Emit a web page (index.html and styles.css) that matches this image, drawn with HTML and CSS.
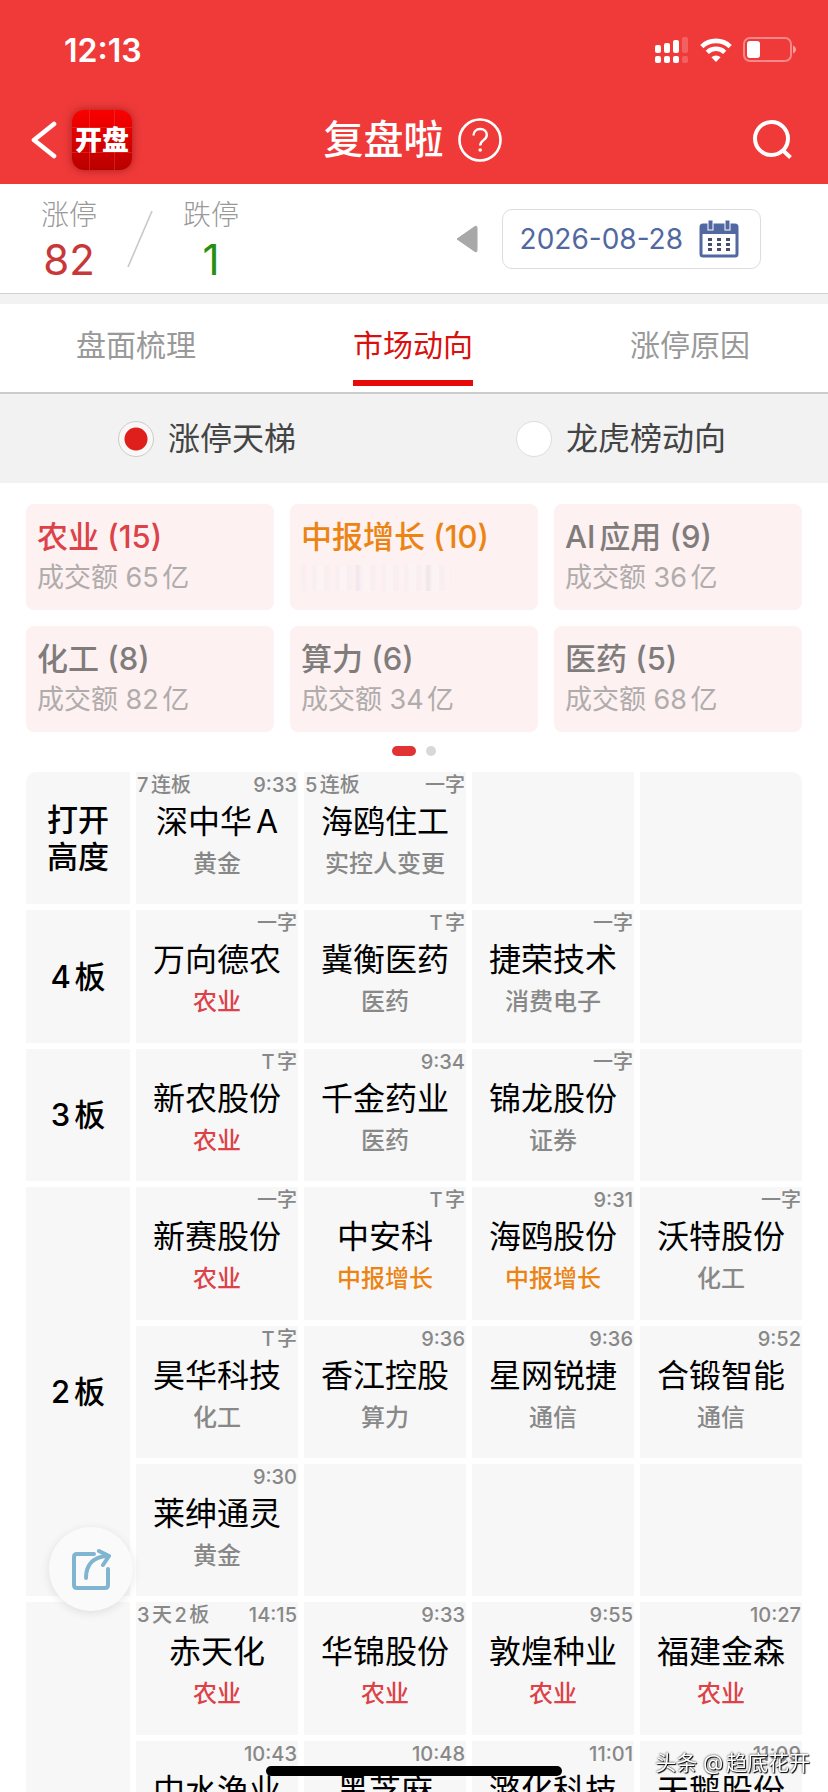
FILE: index.html
```html
<!DOCTYPE html>
<html lang="zh-CN">
<head>
    <meta charset="UTF-8">
    <meta name="viewport" content="width=device-width, initial-scale=1.0">
    <title>复盘啦</title>
    <link rel="stylesheet" href="styles.css">
</head>
<body>
    <header class="top">
        <div class="status">
            <span class="clock">12:13</span>
            <div class="status-icons">
                <svg class="signal" width="34" height="26" viewBox="0 0 34 26" fill="#fff">
                    <rect x="0" y="8" width="6" height="8" rx="2"/>
                    <rect x="9" y="6" width="6" height="10" rx="2"/>
                    <rect x="18" y="3" width="6" height="13" rx="2"/>
                    <rect x="27" y="0" width="6" height="16" rx="2" opacity=".2"/>
                    <rect x="0" y="19" width="6" height="7" rx="2"/>
                    <rect x="9" y="19" width="6" height="7" rx="2"/>
                    <rect x="18" y="19" width="6" height="7" rx="2"/>
                    <rect x="27" y="19" width="6" height="7" rx="2" opacity=".2"/>
                </svg>
                <svg class="wifi" width="32" height="24" viewBox="0 0 32 24">
                    <g fill="none" stroke="#fff" stroke-width="4.6">
                        <path d="M1.8 8.6a20.500 20.500 0 0 1 28.400 0"/>
                        <path d="M7.300 14.300a12.600 12.600 0 0 1 17.400 0"/>
                    </g>
                    <path d="M16 24l-4.600-4.700a6.600 6.600 0 0 1 9.200 0z" fill="#fff"/>
                </svg>
                <svg class="battery" width="54" height="26" viewBox="0 0 54 26">
                    <rect x="1" y="1" width="47" height="23" rx="6" fill="none" stroke="#fff" stroke-width="2" opacity=".4"/>
                    <rect x="4" y="4" width="13" height="17" rx="3" fill="#fff"/>
                    <path d="M50 8.500c4 1.500 4 6.500 0 8z" fill="#fff" opacity=".5"/>
                </svg>
            </div>
        </div>
        <nav class="navbar">
            <div class="nav-left">
                <a href="#" class="back" aria-label="返回">
                    <svg width="26" height="38" viewBox="0 0 26 38" fill="none" stroke="#fff" stroke-width="4.600" stroke-linecap="round" stroke-linejoin="round">
                        <path d="M23 3L3 19l20 16"/>
                    </svg>
                </a>
                <a href="#" class="app-logo">开盘</a>
            </div>
            <div class="nav-title">
                <h1>复盘啦</h1>
                <button class="icon-btn" aria-label="帮助">
                    <svg width="44" height="44" viewBox="0 0 44 44" fill="none" stroke="#fff">
                        <circle cx="22" cy="22" r="20.500" stroke-width="2.600"/>
                        <path d="M15.500 17.500c0-4 2.800-6.500 6.700-6.500s6.600 2.400 6.600 5.900c0 5.300-6.600 5.200-6.600 10.600" stroke-width="2.400"/>
                        <circle cx="22.200" cy="32" r="1.800" fill="#fff" stroke="none"/>
                    </svg>
                </button>
            </div>
            <button class="icon-btn search" aria-label="搜索">
                <svg width="42" height="42" viewBox="0 0 42 42" fill="none" stroke="#fff" stroke-width="4">
                    <circle cx="19.500" cy="19.500" r="16.500"/>
                    <path d="M30.500 31l8 7.500"/>
                </svg>
            </button>
        </nav>
    </header>

    <section class="summary">
        <div class="stat up">
            <span class="stat-name">涨停</span>
            <span class="stat-num">82</span>
        </div>
        <svg class="slash" width="26" height="60" viewBox="0 0 26 60"><path d="M25 2L1 58" stroke="#c8c8c8" stroke-width="1.600"/></svg>
        <div class="stat down">
            <span class="stat-name">跌停</span>
            <span class="stat-num">1</span>
        </div>
        <div class="date-picker">
            <button class="icon-btn" aria-label="前一天">
                <svg width="22" height="28" viewBox="0 0 22 28"><path d="M1 14L19 1.500q2-1 2 1v23q0 2-2 1z" fill="#a8a8a8" stroke="#a8a8a8" stroke-linejoin="round"/></svg>
            </button>
            <button class="date">
                2026-08-28
                <svg width="40" height="38" viewBox="0 0 40 38">
                    <rect x="2" y="5" width="36" height="31" rx="2" fill="#fff" stroke="#5268a0" stroke-width="3"/>
                    <path d="M1 5h38v9H1z" fill="#5268a0"/>
                    <g fill="#5268a0" stroke="#fff" stroke-width="1">
                        <rect x="9" y="0" width="5" height="10"/>
                        <rect x="26" y="0" width="5" height="10"/>
                    </g>
                    <g fill="#454d6b">
                        <rect x="9" y="18" width="4" height="3"/><rect x="18" y="18" width="4" height="3"/><rect x="27" y="18" width="4" height="3"/>
                        <rect x="9" y="23" width="4" height="3"/><rect x="18" y="23" width="4" height="3"/><rect x="27" y="23" width="4" height="3"/>
                        <rect x="9" y="28" width="4" height="3"/><rect x="18" y="28" width="4" height="3"/><rect x="27" y="28" width="4" height="3"/>
                    </g>
                </svg>
            </button>
        </div>
    </section>

    <nav class="tabs">
        <a href="#">盘面梳理</a>
        <a href="#" class="active">市场动向</a>
        <a href="#">涨停原因</a>
    </nav>

    <div class="switch">
        <label><input type="radio" name="view" checked>涨停天梯</label>
        <label><input type="radio" name="view">龙虎榜动向</label>
    </div>

    <main>
        <div class="sectors">
            <a href="#" class="sector red"><b>农业 (15)</b><span>成交额 65亿</span></a>
            <a href="#" class="sector orange"><b>中报增长 (10)</b><i class="smudge"></i></a>
            <a href="#" class="sector"><b>AI应用 (9)</b><span>成交额 36亿</span></a>
            <a href="#" class="sector"><b>化工 (8)</b><span>成交额 82亿</span></a>
            <a href="#" class="sector"><b>算力 (6)</b><span>成交额 34亿</span></a>
            <a href="#" class="sector"><b>医药 (5)</b><span>成交额 68亿</span></a>
        </div>
        <div class="dots"><i class="on"></i><i></i></div>

        <table class="ladder">
            <tbody>
                <tr>
                    <th scope="row">打开<br>高度</th>
                    <td><div class="meta"><span>7连板</span><span>9:33</span></div><p class="name">深中华A</p><p class="tag">黄金</p></td>
                    <td><div class="meta"><span>5连板</span><span>一字</span></div><p class="name">海鸥住工</p><p class="tag">实控人变更</p></td>
                    <td></td>
                    <td></td>
                </tr>
                <tr>
                    <th scope="row">4板</th>
                    <td><div class="meta"><span>一字</span></div><p class="name">万向德农</p><p class="tag red">农业</p></td>
                    <td><div class="meta"><span>T字</span></div><p class="name">冀衡医药</p><p class="tag">医药</p></td>
                    <td><div class="meta"><span>一字</span></div><p class="name">捷荣技术</p><p class="tag">消费电子</p></td>
                    <td></td>
                </tr>
                <tr>
                    <th scope="row">3板</th>
                    <td><div class="meta"><span>T字</span></div><p class="name">新农股份</p><p class="tag red">农业</p></td>
                    <td><div class="meta"><span>9:34</span></div><p class="name">千金药业</p><p class="tag">医药</p></td>
                    <td><div class="meta"><span>一字</span></div><p class="name">锦龙股份</p><p class="tag">证券</p></td>
                    <td></td>
                </tr>
                <tr>
                    <th scope="rowgroup" rowspan="3">2板</th>
                    <td><div class="meta"><span>一字</span></div><p class="name">新赛股份</p><p class="tag red">农业</p></td>
                    <td><div class="meta"><span>T字</span></div><p class="name">中安科</p><p class="tag orange">中报增长</p></td>
                    <td><div class="meta"><span>9:31</span></div><p class="name">海鸥股份</p><p class="tag orange">中报增长</p></td>
                    <td><div class="meta"><span>一字</span></div><p class="name">沃特股份</p><p class="tag">化工</p></td>
                </tr>
                <tr>
                    <td><div class="meta"><span>T字</span></div><p class="name">昊华科技</p><p class="tag">化工</p></td>
                    <td><div class="meta"><span>9:36</span></div><p class="name">香江控股</p><p class="tag">算力</p></td>
                    <td><div class="meta"><span>9:36</span></div><p class="name">星网锐捷</p><p class="tag">通信</p></td>
                    <td><div class="meta"><span>9:52</span></div><p class="name">合锻智能</p><p class="tag">通信</p></td>
                </tr>
                <tr>
                    <td><div class="meta"><span>9:30</span></div><p class="name">莱绅通灵</p><p class="tag">黄金</p></td>
                    <td></td>
                    <td></td>
                    <td></td>
                </tr>
                <tr>
                    <th scope="rowgroup" rowspan="2"></th>
                    <td><div class="meta"><span>3天2板</span><span>14:15</span></div><p class="name">赤天化</p><p class="tag red">农业</p></td>
                    <td><div class="meta"><span>9:33</span></div><p class="name">华锦股份</p><p class="tag red">农业</p></td>
                    <td><div class="meta"><span>9:55</span></div><p class="name">敦煌种业</p><p class="tag red">农业</p></td>
                    <td><div class="meta"><span>10:27</span></div><p class="name">福建金森</p><p class="tag red">农业</p></td>
                </tr>
                <tr>
                    <td><div class="meta"><span>10:43</span></div><p class="name">中水渔业</p></td>
                    <td><div class="meta"><span>10:48</span></div><p class="name">黑芝麻</p></td>
                    <td><div class="meta"><span>11:01</span></div><p class="name">潞化科技</p></td>
                    <td><div class="meta"><span>11:09</span></div><p class="name">天鹅股份</p></td>
                </tr>
            </tbody>
        </table>
    </main>

    <button class="share" aria-label="分享">
        <svg width="40" height="42" viewBox="0 0 40 42" fill="none" stroke="#7fb5d0" stroke-width="4" stroke-linecap="round" stroke-linejoin="round">
            <path d="M23 6H6q-3 0-3 3v28q0 3 3 3h28q3 0 3-3V21"/>
            <path d="M15 30C15 18 21 9 36 8"/>
            <path d="M28 3l10 5-6 9"/>
        </svg>
    </button>
    <div class="home-bar"></div>
    <div class="watermark">头条 @趋底花开</div>
</body>
</html>
```

FILE: styles.css
```css
* {
    box-sizing: border-box;
}
body {
    margin: 0;
    font-family: Inter, 'Noto Sans CJK SC', sans-serif;
    background: #fff;
    color: #000;
    text-autospace: normal;
}
body::-webkit-scrollbar {
    display: none;
}
a {
    color: inherit;
    text-decoration: none;
}
button {
    padding: 0;
    border: none;
    background: none;
    font-family: inherit;
    cursor: pointer;
}
svg {
    display: block;
}
h1, p {
    margin: 0;
}

/* header */
.top {
    background: #ef3a39;
    color: #fff;
}
.status {
    display: flex;
    justify-content: space-between;
    align-items: center;
    height: 96px;
    padding: 4px 31px 0 64px;
}
.clock {
    font-size: 32px;
    font-weight: 600;
}
.status-icons {
    display: flex;
    align-items: center;
    gap: 11px;
}
.navbar {
    display: grid;
    grid-template-columns: 1fr auto 1fr;
    align-items: center;
    height: 88px;
    padding: 0 34px 0 31px;
}
.nav-left {
    display: flex;
    align-items: center;
    gap: 15px;
}
.app-logo {
    width: 60px;
    height: 60px;
    border-radius: 12px;
    background:
        linear-gradient(90deg, transparent 17px, #ff5a4a55 17px 18px, transparent 18px 42px, #ff5a4a55 42px 43px, transparent 43px),
        linear-gradient(transparent 17px, #ff5a4a55 17px 18px, transparent 18px 42px, #ff5a4a55 42px 43px, transparent 43px),
        linear-gradient(#fb0000, #b80000);
    box-shadow: 0 0 8px rgba(100, 0, 0, 0.5);
    font-size: 27px;
    font-weight: 900;
    line-height: 62px;
    text-align: center;
}
.nav-title {
    display: flex;
    align-items: center;
    gap: 14px;
}
.nav-title h1 {
    font-size: 40px;
    font-weight: 500;
    line-height: 56px;
}
.search {
    justify-self: end;
}

/* limit up / down counts and date */
.summary {
    display: flex;
    align-items: center;
    height: 110px;
    padding: 0 67px 0 41px;
    border-bottom: 1px solid #d0d0d0;
}
.stat {
    display: flex;
    flex-direction: column;
    align-items: center;
    padding-bottom: 2px;
    color: #999;
}
.stat-name {
    font-size: 28px;
    font-weight: 300;
    line-height: 44px;
}
.stat-num {
    font-size: 42px;
    line-height: 46px;
}
.up .stat-num {
    color: #c8383a;
}
.down .stat-num {
    color: #259010;
}
.slash {
    margin: 0 30px;
}
.date-picker {
    display: flex;
    align-items: center;
    gap: 24px;
    margin-left: auto;
}
.date {
    display: flex;
    align-items: center;
    gap: 16px;
    height: 60px;
    padding: 0 21px 0 17px;
    border: 1px solid #ddd;
    border-radius: 10px;
    color: #5268a0;
    font-size: 28px;
}

/* tabs */
.tabs {
    display: flex;
    justify-content: space-between;
    height: 100px;
    padding: 0 78px 0 76px;
    border-top: 10px solid #f2f2f2;
    border-bottom: 2px solid #ccc;
    color: #999;
    font-size: 30px;
    line-height: 82px;
}
.tabs a {
    height: 82px;
}
.tabs .active {
    border-bottom: 6px solid #e60a0a;
    color: #d8100e;
}
.switch {
    display: grid;
    grid-template-columns: 1fr 1fr;
    height: 89px;
    background: #f2f2f2;
    color: #444;
    font-size: 32px;
    line-height: 36px;
}
.switch label {
    display: flex;
    align-items: center;
    justify-content: center;
    gap: 14px;
}
.switch input {
    appearance: none;
    width: 36px;
    height: 36px;
    margin: 0;
    border: 1px solid #ddd;
    border-radius: 50%;
    background: #fff;
}
.switch input:checked {
    border-color: #ccc;
    background: radial-gradient(circle, #df1f1c 11px, #f9f6f6 12px);
}

/* hot sectors */
main {
    padding: 21px 26px 0;
}
.sectors {
    display: grid;
    grid-template-columns: repeat(3, 1fr);
    gap: 16px;
}
.sector {
    height: 106px;
    padding: 13px 11px;
    border-radius: 8px;
    background: #fdf1f1;
    color: #b0acac;
}
.sector b {
    display: block;
    color: #807c7c;
    font-size: 31px;
    font-weight: 500;
    line-height: 40px;
}
.sector span {
    display: block;
    font-size: 27px;
    line-height: 42px;
}
.smudge {
    display: block;
    width: 150px;
    height: 26px;
    margin-top: 8px;
    background:
        linear-gradient(90deg, transparent 54px, #f3e9ed 55px 58px, transparent 59px 124px, #efe8ea 126px 128px, transparent 130px),
        repeating-linear-gradient(90deg, #faeff0 0 5px, #fdf1f1 6px 11px, #f9eef1 12px 15px, #fcf3f4 16px 23px);
}
.sector.red b, .tag.red {
    color: #dc4248;
}
.sector.orange b, .tag.orange {
    color: #ec8414;
}
.dots {
    display: flex;
    justify-content: center;
    gap: 10px;
    padding: 14px 0 16px;
}
.dots i {
    width: 10px;
    height: 10px;
    border-radius: 5px;
    background: #d8d8d8;
}
.dots .on {
    width: 24px;
    background: #e03434;
}

/* ladder table */
.ladder {
    width: calc(100% + 12px);
    height: 1113px;
    margin: -6px;
    border-spacing: 6px;
    table-layout: fixed;
}
.ladder th {
    width: 104px;
    padding: 0;
    background: #f7f7f7;
    font-size: 31px;
    font-weight: 500;
    line-height: 37px;
}
.ladder td {
    height: 132px;
    padding: 0 1px;
    background: #f7f7f7;
    text-align: center;
    vertical-align: top;
}
.ladder tr:first-child th {
    border-top-left-radius: 10px;
}
.ladder tr:first-child td:last-child {
    border-top-right-radius: 10px;
}
.meta {
    display: flex;
    color: #888;
    font-size: 20px;
    font-weight: 500;
    line-height: 26px;
}
.meta span:last-child {
    margin-left: auto;
}
.name {
    font-size: 32px;
    line-height: 48px;
}
.tag {
    color: #888;
    font-size: 24px;
    font-weight: 500;
    line-height: 36px;
}

/* things that float over the page */
.share {
    position: fixed;
    left: 49px;
    bottom: 181px;
    display: flex;
    align-items: center;
    justify-content: center;
    width: 84px;
    height: 84px;
    border-radius: 50%;
    background: #fafafa;
    box-shadow: 0 2px 10px rgba(0, 0, 0, 0.1);
}
.home-bar {
    position: fixed;
    left: 50%;
    bottom: 16px;
    width: 296px;
    height: 10px;
    border-radius: 5px;
    background: #000;
    transform: translateX(-50%);
}
.watermark {
    position: fixed;
    right: 18px;
    bottom: 15px;
    color: #fff;
    font-size: 21px;
    line-height: 28px;
    text-shadow: 1px 1px 1px #000, 0 0 2px #000;
}
```
